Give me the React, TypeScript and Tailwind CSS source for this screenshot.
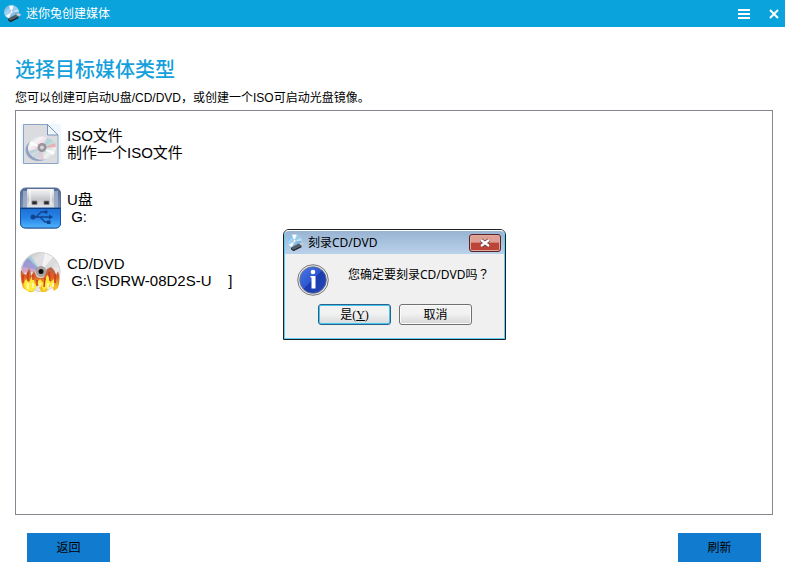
import type { ReactNode } from "react";

const DiscLogo = ({ id }: { id: string }) => (
  <svg viewBox="0 0 18 18" className="h-[18px] w-[18px] shrink-0" aria-hidden="true">
    <defs>
      <linearGradient id={id} x1="0" y1="0" x2="1" y2="1">
        <stop offset="0" stopColor="#4f9fdc" />
        <stop offset="0.35" stopColor="#a5d4f3" />
        <stop offset="0.6" stopColor="#8fc4ea" />
        <stop offset="1" stopColor="#4a8cc8" />
      </linearGradient>
    </defs>
    <ellipse cx="7.500" cy="7" rx="7.300" ry="6.600" fill={`url(#${id})`} stroke="#a9cde6" strokeWidth="0.5" />
    <path d="M7.500 7 5 .8 9.500 .6Z" fill="#fff" />
    <path d="M7.500 7 5 13.300 1.500 11Z" fill="#fff" opacity="0.9" />
    <path d="m7.500 7 6.500-3 .8 3Z" fill="#fff" opacity="0.5" />
    <circle cx="7.500" cy="7" r="1.500" fill="#f4fafe" stroke="#83a9c4" strokeWidth="0.5" />
    <path d="m4 13.500 8-4 2.500 2-8 4Z" fill="#555d66" />
    <path d="m12 9.500 2.800-1.500 2.700 2-3 1.500Z" fill="#c3ccd5" />
    <path d="m4 13.500 2.500 2 8-4v1.800l-8 4-2.500-2Z" fill="#23282e" />
  </svg>
);

const IsoIcon = () => (
  <svg viewBox="0 0 42 42" className="h-[42px] w-[42px]" aria-hidden="true">
    <defs>
      <linearGradient id="isoDisc" x1="0" y1="0" x2="1" y2="1">
        <stop offset="0" stopColor="#c3cbd3" />
        <stop offset="0.25" stopColor="#f5f5f5" />
        <stop offset="0.42" stopColor="#efd6e6" />
        <stop offset="0.55" stopColor="#c0dadb" />
        <stop offset="0.75" stopColor="#f2f2ee" />
        <stop offset="1" stopColor="#bfc4cb" />
      </linearGradient>
    </defs>
    <path d="M1 1h40v40H1Z" fill="#eff8fe" />
    <path d="M3.500 1.500h24l10.500 11v28h-34.500Z" fill="#dadcdf" stroke="#8ba4c4" />
    <path d="M27.500 1.500v10.500H38Z" fill="#edf5fb" stroke="#7893b8" />
    <ellipse cx="18.500" cy="27" rx="13" ry="11" fill="#8fa2c0" />
    <ellipse cx="22" cy="25" rx="14" ry="11.500" fill="url(#isoDisc)" />
    <path d="m22 25 5-10.500 6 3Z" fill="#a9d7d8" opacity="0.8" />
    <path d="m22 25 13-5 1 4Z" fill="#ed9c9c" opacity="0.7" />
    <path d="m22 25-13-4 2-3Z" fill="#fff" />
    <path d="m22 25-5 10 7 1.500Z" fill="#e4c5d5" opacity="0.8" />
    <path d="m22 25-13 3 2 3Z" fill="#a9cfd0" opacity="0.8" />
    <path d="m22 25 11 7 2-3Z" fill="#fff" />
    <circle cx="22" cy="24.500" r="4.500" fill="#8f8b91" opacity="0.9" />
    <circle cx="22" cy="24.500" r="2" fill="#d6d6d6" />
  </svg>
);

const UsbIcon = () => (
  <svg viewBox="0 0 42 42" className="h-[42px] w-[42px]" aria-hidden="true">
    <defs>
      <linearGradient id="usbTop" x1="0" y1="0" x2="0" y2="1">
        <stop offset="0" stopColor="#526c98" />
        <stop offset="1" stopColor="#a3afc2" />
      </linearGradient>
      <linearGradient id="usbMetal" x1="0" y1="0" x2="0" y2="1">
        <stop offset="0" stopColor="#f7f7f8" />
        <stop offset="0.5" stopColor="#c5c7ca" />
        <stop offset="1" stopColor="#ececee" />
      </linearGradient>
      <linearGradient id="usbBody" x1="0" y1="0" x2="0" y2="1">
        <stop offset="0" stopColor="#1c6fd3" />
        <stop offset="0.5" stopColor="#2784e8" />
        <stop offset="1" stopColor="#50b4fb" />
      </linearGradient>
    </defs>
    <rect x="0.500" y="1" width="40" height="40" rx="5" fill="url(#usbTop)" stroke="#5a7096" />
    <path d="M3 4h4v17H3ZM34 4h4v17h-4Z" fill="#b6c5de" opacity="0.6" />
    <rect x="7" y="2" width="27" height="21" rx="1" fill="url(#usbMetal)" />
    <path d="M10 3v15M31 3v15" stroke="#fff" />
    <path d="M12 14h5v3.500h-5ZM24 14h5v3.500h-5Z" fill="#292b30" stroke="#85878b" strokeWidth="0.8" />
    <path d="M.5 21h40v15q0 5-5 5h-30q-5 0-5-5Z" fill="url(#usbBody)" stroke="#1b519e" />
    <path d="M1 21.500h39" stroke="#103d82" strokeWidth="1.200" />
    <g stroke="#12438f" strokeWidth="1.300" fill="none">
      <path d="M12 30h19M16 30l5-5h4M20 30l5 5h4" />
    </g>
    <circle cx="13" cy="30" r="2.500" fill="#12438f" />
    <circle cx="26" cy="25" r="1.700" fill="#12438f" />
    <path d="m29 27.500 4 2.500-4 2.500ZM27 33.500h3.500V37H27Z" fill="#12438f" />
  </svg>
);

const BurnIcon = () => (
  <svg viewBox="0 0 42 42" className="h-[42px] w-[42px]" aria-hidden="true">
    <defs>
      <linearGradient id="burnDisc" x1="0" y1="0" x2="1" y2="1">
        <stop offset="0" stopColor="#b5b8bc" />
        <stop offset="0.3" stopColor="#e0e0e2" />
        <stop offset="0.55" stopColor="#d9dadc" />
        <stop offset="0.8" stopColor="#f3f3f3" />
        <stop offset="1" stopColor="#c9c9c9" />
      </linearGradient>
      <linearGradient id="flame" x1="0" y1="0" x2="0" y2="1">
        <stop offset="0" stopColor="#b5624a" />
        <stop offset="0.4" stopColor="#dd5f24" />
        <stop offset="0.75" stopColor="#f5b52c" />
        <stop offset="1" stopColor="#f7c426" />
      </linearGradient>
    </defs>
    <circle cx="20.500" cy="21" r="19.500" fill="url(#burnDisc)" stroke="#cfd0d2" />
    <path d="M21 20 2.500 16Q4 10 8 7Z" fill="#8c86cf" opacity="0.75" />
    <path d="M21 20 7 8l4-3Z" fill="#67b9d9" opacity="0.4" />
    <path d="M21 20 2 16v6Z" fill="#c96ca8" opacity="0.5" />
    <path d="M21 20 25 2l8 4Z" fill="#f8f8f8" opacity="0.8" />
    <path
      d="M3 37Q0 29 1 19q2 4 5 5l3-7q2 4 2 8l3-5 3 6q4 2 7 0l3-8 4-2q4 3 5 8l2-4q3 8 0 17l-4 3-3-6-5 7h-5l-3-8-5 8H9Z"
      fill="url(#flame)"
    />
    <path d="M5 37q-2-5 1-9l3 4 3-7q3 4 3 9l5-6 4 5 3-9q4 3 3 8l4-4q1 5-1 9l-4-3-5 6-4-8-7 8H7Z" fill="#ffec3a" />
    <path d="M3 32v-8M8 30v-9M13 29v-5M17 35v-6M24 36l1-9M30 30l-1-9M35 32v-9" stroke="#c83d22" strokeWidth="1.500" />
    <path d="M8 38v-6M13 37v-5M20 36v-4M28 38v-6M33 36v-4" stroke="#fffbd0" strokeWidth="1.500" />
    <circle cx="21" cy="20.500" r="5" fill="#aaa3a4" stroke="#9b9696" strokeWidth="0.8" />
    <circle cx="21" cy="20.500" r="2.500" fill="#0d0d0d" />
  </svg>
);

const InfoIcon = () => (
  <svg viewBox="0 0 32 32" className="h-8 w-8" aria-hidden="true">
    <defs>
      <linearGradient id="infoBlue" x1="0" y1="0" x2="1" y2="1">
        <stop offset="0" stopColor="#4d78e3" />
        <stop offset="0.49" stopColor="#2c56d0" />
        <stop offset="0.5" stopColor="#1a3cb0" />
        <stop offset="1" stopColor="#2448b8" />
      </linearGradient>
    </defs>
    <circle cx="16" cy="16" r="15.300" fill="#e6e6e6" stroke="#777" />
    <circle cx="16" cy="16" r="13.300" fill="url(#infoBlue)" stroke="#6e7485" strokeWidth="0.8" />
    <circle cx="16" cy="8" r="2.300" fill="#fff" />
    <path d="M13.500 12h5v12.500h-4V13.500h-1Z" fill="#fff" />
  </svg>
);

type Media = { name: string; detail: string; icon: ReactNode };

const mediaList: Media[] = [
  { name: "ISO文件", detail: "制作一个ISO文件", icon: <IsoIcon /> },
  { name: "U盘", detail: " G:", icon: <UsbIcon /> },
  { name: "CD/DVD", detail: " G:\\ [SDRW-08D2S-U    ]", icon: <BurnIcon /> },
];

const TitleBar = () => (
  <header className="flex h-[27px] items-center bg-[#0aa3dc] pr-[5px] pl-1 text-white">
    <DiscLogo id="mainDisc" />
    <span className="ml-1 text-xs">迷你兔创建媒体</span>
    <div className="ml-auto flex items-center gap-[18px]">
      <button type="button" aria-label="菜单">
        <svg viewBox="0 0 12 10" className="h-[10px] w-3" aria-hidden="true">
          <path d="M0 1h12M0 5h12M0 9h12" stroke="#fff" strokeWidth="2" />
        </svg>
      </button>
      <button type="button" aria-label="关闭">
        <svg viewBox="0 0 12 10" className="h-[10px] w-3" aria-hidden="true">
          <path d="m2 1 8 8M10 1 2 9" stroke="#fff" strokeWidth="2" />
        </svg>
      </button>
    </div>
  </header>
);

const BurnDialog = () => (
  <div
    role="dialog"
    aria-labelledby="burn-title"
    className="absolute top-[229px] left-[283px] w-[223px] rounded-t-md border border-[#1b2026] bg-[#f0f0f0] font-['Noto_Sans','Noto_Sans_CJK_SC',sans-serif] text-xs"
  >
    <div className="rounded-t-[5px] border border-[#5fcdf0] border-t-white">
      <div className="flex h-[23px] items-center rounded-t-[4px] bg-linear-to-b from-[#98b4d2] to-[#bad1ea] pr-[3px] pl-[2px]">
        <DiscLogo id="dialogDisc" />
        <h2 id="burn-title" className="ml-[3px]">
          刻录CD/DVD
        </h2>
        <button
          type="button"
          aria-label="关闭"
          className="ml-auto flex h-[18px] w-8 items-center justify-center rounded-[3px] border border-[#5b2328] bg-linear-to-b from-[#dea095] from-45% to-[#bc4538] to-50% shadow-[inset_0_0_0_1px_#e2a99f]"
        >
          <svg viewBox="0 0 12 10" className="h-[10px] w-3" aria-hidden="true">
            <path d="m2 2 8 6M10 2 2 8" stroke="#6c4246" strokeWidth="4" />
            <path d="m2 2 8 6M10 2 2 8" stroke="#fff" strokeWidth="2.200" />
          </svg>
        </button>
      </div>
      <div className="px-3 pt-[10px] pb-[13px]">
        <div className="flex gap-[19px]">
          <InfoIcon />
          <p className="pt-[2px] whitespace-nowrap">
            您确定要刻录CD/DVD吗<span className="font-['Noto_Sans_CJK_TC',sans-serif]">？</span>
          </p>
        </div>
        <div className="mt-2 flex gap-2 pl-[21px] font-['Liberation_Sans','Noto_Sans_CJK_SC',sans-serif]">
          <button
            type="button"
            className="h-[21px] w-[73px] shrink-0 rounded-[3px] border border-[#2c628b] bg-linear-to-b from-[#f2f2f2] from-45% to-[#d6dadc] shadow-[inset_0_0_0_1px_#42c5ee]"
          >
            是<span className="font-['Liberation_Serif',serif]">(<u>Y</u>)</span>
          </button>
          <button
            type="button"
            className="h-[21px] w-[73px] shrink-0 rounded-[3px] border border-[#707070] bg-linear-to-b from-[#f2f2f2] from-45% to-[#d6d6d6] shadow-[inset_0_0_0_1px_#fbfbfb]"
          >
            取消
          </button>
        </div>
      </div>
    </div>
  </div>
);

const App = () => (
  <div className="relative flex min-h-screen flex-col bg-white font-['Liberation_Sans','Noto_Sans_CJK_SC',sans-serif] text-black">
    <TitleBar />
    <main className="flex flex-1 flex-col pr-3 pl-[15px]">
      <h1 className="mt-[29px] text-xl font-medium text-[#14a0dc]">选择目标媒体类型</h1>
      <p className="mt-[6px] mb-1 text-xs">
        您可以创建可启动U盘/CD/DVD，或创建一个ISO可启动光盘镜像。
      </p>
      <ul className="flex flex-1 flex-col gap-[22px] border border-[#828790] pt-3 pl-1">
        {mediaList.map((media) => (
          <li key={media.name} className="flex items-center gap-[5px]">
            {media.icon}
            <div className="text-[15px] leading-[17px] whitespace-pre">
              <p>{media.name}</p>
              <p>{media.detail}</p>
            </div>
          </li>
        ))}
      </ul>
      <footer className="flex justify-between px-3 pt-[18px] pb-[22px] text-xs">
        <button type="button" className="h-[29px] w-[83px] bg-[#107bcf]">
          返回
        </button>
        <button type="button" className="h-[29px] w-[83px] bg-[#107bcf]">
          刷新
        </button>
      </footer>
    </main>
    <BurnDialog />
  </div>
);

export default App;
